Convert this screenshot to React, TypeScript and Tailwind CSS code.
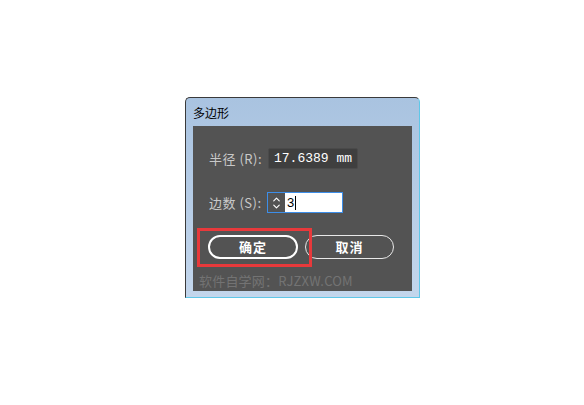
import { ChevronUp, ChevronDown } from "lucide-react";

const cjk = { fontFamily: '"Noto Sans CJK SC", "Noto Sans", sans-serif' };
const mono = { fontFamily: '"Liberation Mono", "Noto Sans CJK SC", monospace' };

export default function App() {
  return (
    <div className="w-[584px] h-[405px] bg-white pt-[97px] pl-[185px]">
      <div className="w-[235px] h-[201px] flex flex-col rounded-tl-[5px] rounded-tr-[5px] border border-[#3a3a3a] border-r-[#5fc7e8] border-b-[#5fc7e8] bg-gradient-to-b from-[#a9c3e0] to-[#c3d6ec] px-[7px] pb-[6px]">
        <div className="h-[28px] flex items-center pt-[2px] text-[12px] text-black" style={cjk}>
          多边形
        </div>

        <div className="relative flex-1 bg-[#535353] flex flex-col" style={cjk}>
          <div className="flex items-center mt-[22px] pl-[16px]">
            <span className="w-[59px] text-[13px] text-[#c9c9c9] tracking-[0.5px]">半径 (R):</span>
            <div className="w-[90px] h-[21px] bg-[#3f3f3f] border border-[#4a4a4a] rounded-[2px] flex items-center pl-[5px] text-[13px] text-white" style={mono}>
              17.6389 mm
            </div>
          </div>

          <div className="flex items-center mt-[23px] pl-[16px]">
            <span className="w-[58px] text-[13px] text-[#c9c9c9] tracking-[0.5px]">边数 (S):</span>
            <div className="w-[76px] h-[21px] border border-[#3d8ee8] flex">
              <div className="w-[17px] flex flex-col items-center justify-center bg-[#535353] text-white">
                <ChevronUp size={11} strokeWidth={2.5} className="-mb-[2px]" />
                <ChevronDown size={11} strokeWidth={2.5} className="-mt-[2px]" />
              </div>
              <div className="flex-1 bg-white flex items-center pl-[2px] text-[13px] text-black" style={{ fontFamily: '"Liberation Sans", sans-serif' }}>
                3<span className="w-[1px] h-[14px] bg-black ml-[1px]" />
              </div>
            </div>
          </div>

          <div className="flex mt-[22px] pl-[15px] gap-[7px]">
            <button className="w-[90px] h-[24px] rounded-full border-2 border-white text-white text-[13px] font-semibold tracking-[1px]">
              确定
            </button>
            <button className="w-[89px] h-[24px] rounded-full border-[1.5px] border-[#e8e8e8] text-white text-[13px] font-semibold tracking-[1px]">
              取消
            </button>
          </div>

          <div className="mt-[12px] pl-[6px] text-[13px] text-[#737373] tracking-[0.2px]">
            软件自学网：RJZXW.COM
          </div>

          <div className="absolute left-[4px] top-[102px] w-[115px] h-[39px] border-[3px] border-[#e8393b]" />
        </div>
      </div>
    </div>
  );
}
